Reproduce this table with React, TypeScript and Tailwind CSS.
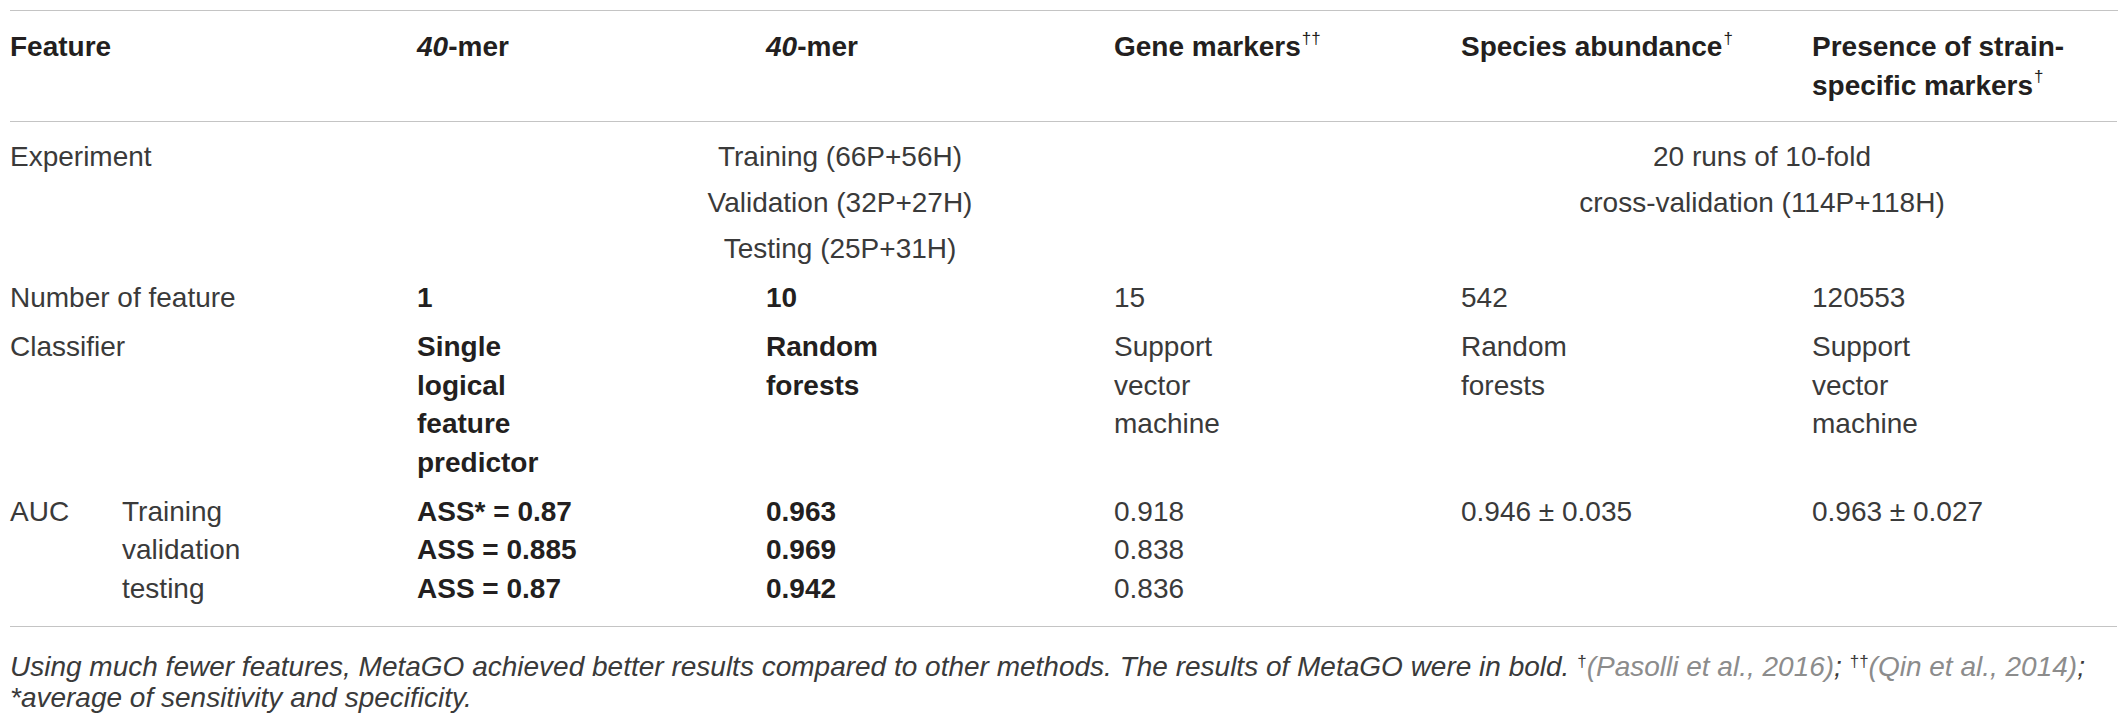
const line = "border-[#c4c4c4]"

function Dag({ n = 1 }: { n?: number }) {
  return (
    <sup className="relative -top-[2px] ml-[1px] align-super text-[17px] font-normal leading-none">
      {"\u2020".repeat(n)}
    </sup>
  )
}

function Head({ children, last }: { children: React.ReactNode; last?: boolean }) {
  return (
    <div className={`border-b ${line} pt-[17px] pb-[16px] font-bold text-[#231f20] ${last ? "pr-2" : ""}`}>
      {children}
    </div>
  )
}

function Lines({ items, bold }: { items: string[]; bold?: boolean }) {
  return (
    <div className={bold ? "font-bold text-[#231f20]" : ""}>
      {items.map((t, i) => (
        <div key={i}>{t}</div>
      ))}
    </div>
  )
}

export default function App() {
  const row = "pt-[5.25px] pb-[5.25px]"
  const auc = `pt-[5.25px] pb-[17.5px] border-b ${line}`

  return (
    <div className="min-h-screen bg-white px-[10px] pt-[10px] font-['Liberation_Sans',Arial,sans-serif] text-[28px] leading-[38.5px] text-[#3a3a3a]">
      <div className={`grid grid-cols-[407px_349px_348px_347px_351px_305px] border-t ${line}`}>
        {/* header */}
        <Head>Feature</Head>
        <Head>
          <i>40</i>-mer
        </Head>
        <Head>
          <i>40</i>-mer
        </Head>
        <Head>
          Gene markers<Dag n={2} />
        </Head>
        <Head>
          Species abundance<Dag />
        </Head>
        <Head last>
          Presence of strain-
          <br />
          specific markers<Dag />
        </Head>

        {/* experiment */}
        <div className="pt-[12px] pb-[2px] leading-[46px]">Experiment</div>
        <div className="col-span-3 pt-[12px] pb-[2px] leading-[46px]">
          <div className="w-[846px] text-center">
            <div>Training (66P+56H)</div>
            <div>Validation (32P+27H)</div>
            <div>Testing (25P+31H)</div>
          </div>
        </div>
        <div className="col-span-2 pt-[12px] pb-[2px] leading-[46px]">
          <div className="w-[602px] text-center">
            <div>20 runs of 10-fold</div>
            <div>cross-validation (114P+118H)</div>
          </div>
        </div>

        {/* number of feature */}
        <div className={row}>Number of feature</div>
        <div className={`${row} font-bold text-[#231f20]`}>1</div>
        <div className={`${row} font-bold text-[#231f20]`}>10</div>
        <div className={row}>15</div>
        <div className={row}>542</div>
        <div className={row}>120553</div>

        {/* classifier */}
        <div className={row}>Classifier</div>
        <div className={row}>
          <Lines bold items={["Single", "logical", "feature", "predictor"]} />
        </div>
        <div className={row}>
          <Lines bold items={["Random", "forests"]} />
        </div>
        <div className={row}>
          <Lines items={["Support", "vector", "machine"]} />
        </div>
        <div className={row}>
          <Lines items={["Random", "forests"]} />
        </div>
        <div className={row}>
          <Lines items={["Support", "vector", "machine"]} />
        </div>

        {/* AUC */}
        <div className={`${auc} flex`}>
          <div className="w-[112px]">AUC</div>
          <Lines items={["Training", "validation", "testing"]} />
        </div>
        <div className={auc}>
          <Lines bold items={["ASS* = 0.87", "ASS = 0.885", "ASS = 0.87"]} />
        </div>
        <div className={auc}>
          <Lines bold items={["0.963", "0.969", "0.942"]} />
        </div>
        <div className={auc}>
          <Lines items={["0.918", "0.838", "0.836"]} />
        </div>
        <div className={auc}>0.946 ± 0.035</div>
        <div className={auc}>0.963 ± 0.027</div>
      </div>

      {/* footnote */}
      <p className="pt-[24px] text-[28px] leading-[31.5px] italic text-[#3a3a3a]">
        Using much fewer features, MetaGO achieved better results compared to other methods. The results of MetaGO were in bold.{" "}
        <sup className="text-[17px] not-italic">{"\u2020"}</sup>
        <span className="text-[#8c8c8c]">(Pasolli et al., 2016)</span>;{" "}
        <sup className="text-[17px] not-italic">{"\u2020\u2020"}</sup>
        <span className="text-[#8c8c8c]">(Qin et al., 2014)</span>;
        <br />
        *average of sensitivity and specificity.
      </p>
    </div>
  )
}
